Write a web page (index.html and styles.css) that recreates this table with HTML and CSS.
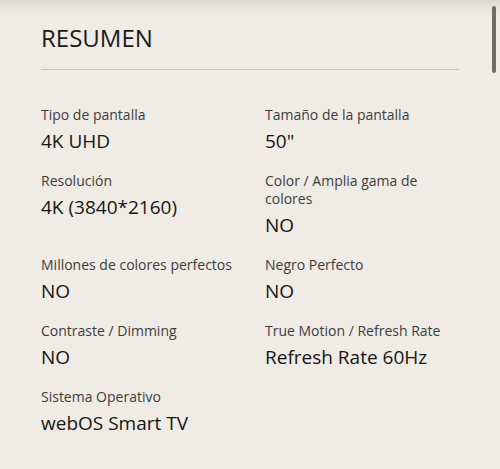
FILE: index.html
```html
<!DOCTYPE html>
<html lang="es">
<head>
<meta charset="utf-8">
<link rel="stylesheet" href="styles.css">
</head>
<body>
<div class="page">
  <h2 class="title">RESUMEN</h2>
  <hr class="divider">
  <dl class="specs">
    <div class="spec"><dt>Tipo de pantalla</dt><dd>4K UHD</dd></div>
    <div class="spec"><dt>Tamaño de la pantalla</dt><dd>50"</dd></div>
    <div class="spec"><dt>Resolución</dt><dd>4K (3840*2160)</dd></div>
    <div class="spec"><dt>Color / Amplia gama de colores</dt><dd>NO</dd></div>
    <div class="spec"><dt>Millones de colores perfectos</dt><dd>NO</dd></div>
    <div class="spec"><dt>Negro Perfecto</dt><dd>NO</dd></div>
    <div class="spec"><dt>Contraste / Dimming</dt><dd>NO</dd></div>
    <div class="spec"><dt>True Motion / Refresh Rate</dt><dd>Refresh Rate 60Hz</dd></div>
    <div class="spec"><dt>Sistema Operativo</dt><dd>webOS Smart TV</dd></div>
  </dl>
</div>
<div class="scrollbar"></div>
</body>
</html>
```
FILE: styles.css
```css
html, body {
  margin: 0;
  padding: 0;
}
body {
  width: 500px;
  height: 469px;
  overflow: hidden;
  background: linear-gradient(to bottom, #d9d5cf 0px, #e8e4de 8px, #efebe5 18px, #efebe5 100%);
  font-family: "Open Sans", "Noto Sans", sans-serif;
  color: #1f1f1f;
  position: relative;
}
.page {
  padding: 21px 41px 0 41px;
}
.title {
  margin: 0;
  font-size: 24px;
  font-weight: 400;
  line-height: 34px;
  color: #1a1a1a;
}
.divider {
  margin: 14px 0 0 0;
  border: 0;
  height: 1px;
  background: #c8c4be;
}
.specs {
  margin: 36px 0 0 0;
  display: grid;
  grid-template-columns: 194px 194px;
  column-gap: 30px;
  row-gap: 16px;
}
.spec {
  margin: 0;
}
.spec dt {
  font-size: 14px;
  line-height: 18px;
  color: #3d3d3d;
}
.spec dd {
  margin: 2px 0 0 0;
  font-size: 19px;
  line-height: 30px;
  color: #161616;
}
.scrollbar {
  position: absolute;
  top: 6px;
  right: 4px;
  width: 4px;
  height: 67px;
  border-radius: 2px;
  background: #6d6d6b;
}
```
